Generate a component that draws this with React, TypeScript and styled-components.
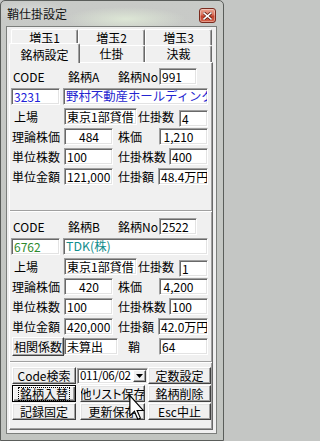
import React from "react";
import styled, { createGlobalStyle, css } from "styled-components";

const GlobalStyle = createGlobalStyle`
  html, body {
    margin: 0;
    padding: 0;
    background: #c4c6c4;
  }
  body {
    width: 224px;
    height: 441px;
    overflow: hidden;
    font-family: "Noto Sans CJK JP", "Noto Sans", sans-serif;
    color: #000;
  }
  * {
    box-sizing: border-box;
  }
`;

const Window = styled.div`
  position: relative;
  width: 224px;
  height: 441px;
  display: flex;
  flex-direction: column;
  padding: 0 6px 6px 5px;
  border: 1px solid #5a5d5a;
  border-radius: 5px 5px 0 0;
  background:
    radial-gradient(ellipse 60px 12px at 125px 18px, rgba(222, 232, 214, 0.95), rgba(222, 232, 214, 0)),
    radial-gradient(ellipse 40px 10px at 30px 10px, rgba(220, 222, 220, 0.8), rgba(220, 222, 220, 0)),
    linear-gradient(180deg, #c8cac7 0%, #c1c4c0 100%);
`;

const TitleBar = styled.div`
  flex: none;
  height: 25px;
  display: flex;
  align-items: center;
  justify-content: space-between;
  padding-left: 1px;
`;

const Title = styled.span`
  font-size: 12px;
  color: #141414;
  margin-top: -1px;
`;

const CloseButton = styled.div`
  align-self: flex-start;
  margin-top: 7px;
  margin-right: 1px;
  width: 17px;
  height: 15px;
  display: flex;
  align-items: center;
  justify-content: center;
  border: 1px solid #7a2a1e;
  border-radius: 3px;
  background: linear-gradient(180deg, #eba896 0%, #d9705a 45%, #c2412b 55%, #d6654c 100%);
  box-shadow: inset 0 0 0 1px rgba(255, 255, 255, 0.35);
`;

const Client = styled.div`
  flex: 1;
  display: flex;
  flex-direction: column;
  background: #f0f0f0;
  border: 1px solid #7b7e7b;
  padding: 2px 3px 3px 2px;
`;

const TabRow = styled.div<{ $h: number }>`
  flex: none;
  display: flex;
  align-items: flex-end;
  height: ${(p) => p.$h}px;
  padding-left: 2px;
`;

const Tab = styled.div<{ $active?: boolean }>`
  flex: none;
  width: 67px;
  height: 100%;
  display: flex;
  align-items: center;
  justify-content: center;
  background: #f0f0f0;
  border-top: 1px solid #fff;
  border-left: 1px solid #fff;
  border-right: 1px solid #696969;
  box-shadow: inset -1px 0 0 #a0a0a0;
  border-radius: 2px 2px 0 0;
  font-size: 12px;
  line-height: 12px;
  white-space: nowrap;

  ${(p) =>
    p.$active &&
    css`
      position: relative;
      z-index: 2;
      width: 71px;
      height: 20px;
      margin: 0 -2px -1px;
      padding-top: 2px;
    `}
`;

const TabPage = styled.div`
  flex: 1;
  display: flex;
  flex-direction: column;
  border: 1px solid;
  border-color: #fff #696969 #696969 #fff;
  box-shadow: inset -1px -1px 0 #a0a0a0;
  padding: 5px 0 4px 0;
`;

const Group = styled.div`
  display: flex;
  flex-direction: column;
  gap: 3px;
  padding-right: 3px;
`;

const Row = styled.div`
  display: flex;
  align-items: center;
  height: 17px;
`;

const Label = styled.span<{ $w: number; $pl?: number }>`
  flex: none;
  width: ${(p) => p.$w}px;
  padding-left: ${(p) => p.$pl ?? 2}px;
  font-size: 12px;
  line-height: 17px;
  white-space: nowrap;
`;

const Field = styled.div<{
  $w: number;
  $ml?: number;
  $center?: boolean;
  $pr?: number;
  $color?: string;
  $big?: boolean;
  $drop?: boolean;
}>`
  flex: none;
  width: ${(p) => p.$w}px;
  height: 17px;
  margin-left: ${(p) => p.$ml ?? 0}px;
  background: #fff;
  border: 1px solid;
  border-color: #a0a0a0 #fff #fff #a0a0a0;
  box-shadow: inset 1px 1px 0 #696969, inset -1px -1px 0 #e3e3e3;
  padding: 0 ${(p) => p.$pr ?? 1}px 0 2px;
  font-size: ${(p) => (p.$big ? 12.4 : 12)}px;
  line-height: 15px;
  white-space: nowrap;
  overflow: hidden;
  color: ${(p) => p.$color ?? "#000"};
  text-align: ${(p) => (p.$center ? "center" : "left")};

  ${(p) =>
    p.$drop &&
    css`
      align-self: flex-start;
      margin-top: 2px;
    `}
`;

const Separator = styled.div<{ $mt: number; $mb?: number }>`
  flex: none;
  height: 2px;
  margin-top: ${(p) => p.$mt}px;
  margin-bottom: ${(p) => p.$mb ?? 0}px;
  border-top: 1px solid #a0a0a0;
  border-bottom: 1px solid #fff;
`;

const Button = styled.div<{ $default?: boolean; $w?: number; $ml?: number; $h?: number }>`
  flex: none;
  width: ${(p) => (p.$w ? `${p.$w}px` : "auto")};
  height: ${(p) => p.$h ?? 17}px;
  margin-left: ${(p) => p.$ml ?? 0}px;
  display: flex;
  align-items: center;
  justify-content: center;
  background: #f0f0f0;
  border: 1px solid;
  border-color: #fff #404040 #404040 #fff;
  box-shadow: inset -1px -1px 0 #a0a0a0, inset 1px 1px 0 #e3e3e3;
  font-size: 12px;
  line-height: 14px;
  white-space: nowrap;
  overflow: hidden;

  ${(p) =>
    p.$default &&
    css`
      border-color: #000;
      box-shadow: inset 1px 1px 0 #fff, inset -1px -1px 0 #696969, inset -2px -2px 0 #a0a0a0;
    `}
`;

const FocusText = styled.span`
  outline: 1px dotted #000;
  outline-offset: 0;
  padding: 0 1px;
  line-height: 12px;
`;

const ButtonGrid = styled.div`
  display: grid;
  grid-template-columns: 65px 71px 63px;
  grid-auto-rows: 17px;
  row-gap: 1px;
  margin-top: 4px;
  padding-left: 2px;
`;

const MidButton = styled(Button)`
  margin: 0 3px;
  font-feature-settings: "palt";
`;

const Combo = styled.div`
  align-self: center;
  height: 16px;
  display: flex;
  align-items: center;
  background: #fff;
  border: 1px solid;
  border-color: #a0a0a0 #fff #fff #a0a0a0;
  box-shadow: inset 1px 1px 0 #696969, inset -1px -1px 0 #e3e3e3;
  padding: 1px 1px 1px 2px;
  font-size: 11.5px;
`;

const ComboText = styled.span`
  flex: 1;
  white-space: nowrap;
  line-height: 13px;
  letter-spacing: -0.35px;
`;

const DropButton = styled.div`
  flex: none;
  width: 13px;
  height: 12px;
  display: flex;
  align-items: center;
  justify-content: center;
  background: #f0f0f0;
  border: 1px solid;
  border-color: #fff #404040 #404040 #fff;
  box-shadow: inset -1px -1px 0 #a0a0a0;
`;

const Cursor = styled.svg`
  position: absolute;
  left: 128px;
  top: 394px;
  pointer-events: none;
`;

type Stock = {
  tag: string;
  no: string;
  code: string;
  codeColor: string;
  name: string;
  nameColor: string;
  market: string;
  lots: string;
  theory: string;
  price: string;
  unit: string;
  lotShares: string;
  unitAmount: string;
  amount: string;
  corr?: { value: string; spread: string };
};

const stocks: Stock[] = [
  {
    tag: "銘柄A",
    no: "991",
    code: "3231",
    codeColor: "#2020d8",
    name: "野村不動産ホールディングス",
    nameColor: "#2424d0",
    market: "東京1部貸借",
    lots: "4",
    theory: "484",
    price: "1,210",
    unit: "100",
    lotShares: "400",
    unitAmount: "121,000",
    amount: "48.4万円",
  },
  {
    tag: "銘柄B",
    no: "2522",
    code: "6762",
    codeColor: "#2e8a2e",
    name: "TDK(株)",
    nameColor: "#128e8e",
    market: "東京1部貸借",
    lots: "1",
    theory: "420",
    price: "4,200",
    unit: "100",
    lotShares: "100",
    unitAmount: "420,000",
    amount: "42.0万円",
    corr: { value: "未算出", spread: "64" },
  },
];

const StockGroup = ({ s }: { s: Stock }) => (
  <Group>
    <Row>
      <Label $w={58} $pl={3}>CODE</Label>
      <Label $w={50} $pl={0}>{s.tag}</Label>
      <Label $w={41} $pl={0}>銘柄No</Label>
      <Field $w={38}>{s.no}</Field>
    </Row>
    <Row>
      <Field $w={49} $ml={1} $color={s.codeColor}>{s.code}</Field>
      <Field $w={145} $ml={3} $color={s.nameColor} $big>{s.name}</Field>
    </Row>
    <Row>
      <Label $w={54} $pl={4}>上場</Label>
      <Field $w={73}>{s.market}</Field>
      <Label $w={42} $pl={1}>仕掛数</Label>
      <Field $w={29} $drop>{s.lots}</Field>
    </Row>
    <Row>
      <Label $w={54}>理論株価</Label>
      <Field $w={49} $center>{s.theory}</Field>
      <Label $w={46} $pl={5}>株価</Label>
      <Field $w={49} $center $pr={12}>{s.price}</Field>
    </Row>
    <Row>
      <Label $w={54}>単位株数</Label>
      <Field $w={49}>{s.unit}</Field>
      <Label $w={56} $pl={5}>仕掛株数</Label>
      <Field $w={39}>{s.lotShares}</Field>
    </Row>
    <Row>
      <Label $w={54}>単位金額</Label>
      <Field $w={49}>{s.unitAmount}</Field>
      <Label $w={45} $pl={5}>仕掛額</Label>
      <Field $w={50}>{s.amount}</Field>
    </Row>
    <Row>
      {s.corr && (
        <>
          <Button $w={52} $ml={2} $h={19}>相関係数</Button>
          <Field $w={54}>{s.corr.value}</Field>
          <Label $w={41} $pl={10}>鞘</Label>
          <Field $w={49}>{s.corr.spread}</Field>
        </>
      )}
    </Row>
  </Group>
);

export default function App() {
  return (
    <>
      <GlobalStyle />
      <Window>
        <TitleBar>
          <Title>鞘仕掛設定</Title>
          <CloseButton>
            <svg width="9" height="8" viewBox="0 0 9 8">
              <path d="M1 1 L8 7 M8 1 L1 7" stroke="#5a1a10" strokeWidth="3" strokeLinecap="square" />
              <path d="M1 1 L8 7 M8 1 L1 7" stroke="#fff" strokeWidth="1.6" strokeLinecap="square" />
            </svg>
          </CloseButton>
        </TitleBar>
        <Client>
          <TabRow $h={16}>
            <Tab>増玉1</Tab>
            <Tab>増玉2</Tab>
            <Tab>増玉3</Tab>
          </TabRow>
          <TabRow $h={17}>
            <Tab $active>銘柄設定</Tab>
            <Tab>仕掛</Tab>
            <Tab>決裁</Tab>
          </TabRow>
          <TabPage>
            <StockGroup s={stocks[0]} />
            <Separator $mt={5} $mb={6} />
            <StockGroup s={stocks[1]} />
            <Separator $mt={6} />
            <ButtonGrid>
              <Button $w={64}>Code検索</Button>
              <Combo>
                <ComboText>011/06/02</ComboText>
                <DropButton>
                  <svg width="7" height="4" viewBox="0 0 7 4">
                    <path d="M0 0 H7 L3.5 4 Z" fill="#000" />
                  </svg>
                </DropButton>
              </Combo>
              <Button>定数設定</Button>
              <Button $w={64} $default>
                <FocusText>銘柄入替</FocusText>
              </Button>
              <MidButton>他リスト保存</MidButton>
              <Button>銘柄削除</Button>
              <Button $w={64}>記録固定</Button>
              <MidButton>更新保存</MidButton>
              <Button>Esc中止</Button>
            </ButtonGrid>
          </TabPage>
        </Client>
        <Cursor width="16" height="26" viewBox="0 0 12 20">
          <path
            d="M0.5 0.5 L0.5 16 L4 12.6 L6.6 18.6 L8.6 17.8 L6.1 11.9 L10.8 11.9 Z"
            fill="#fff"
            stroke="#000"
            strokeWidth="0.9"
            strokeLinejoin="miter"
          />
        </Cursor>
      </Window>
    </>
  );
}
